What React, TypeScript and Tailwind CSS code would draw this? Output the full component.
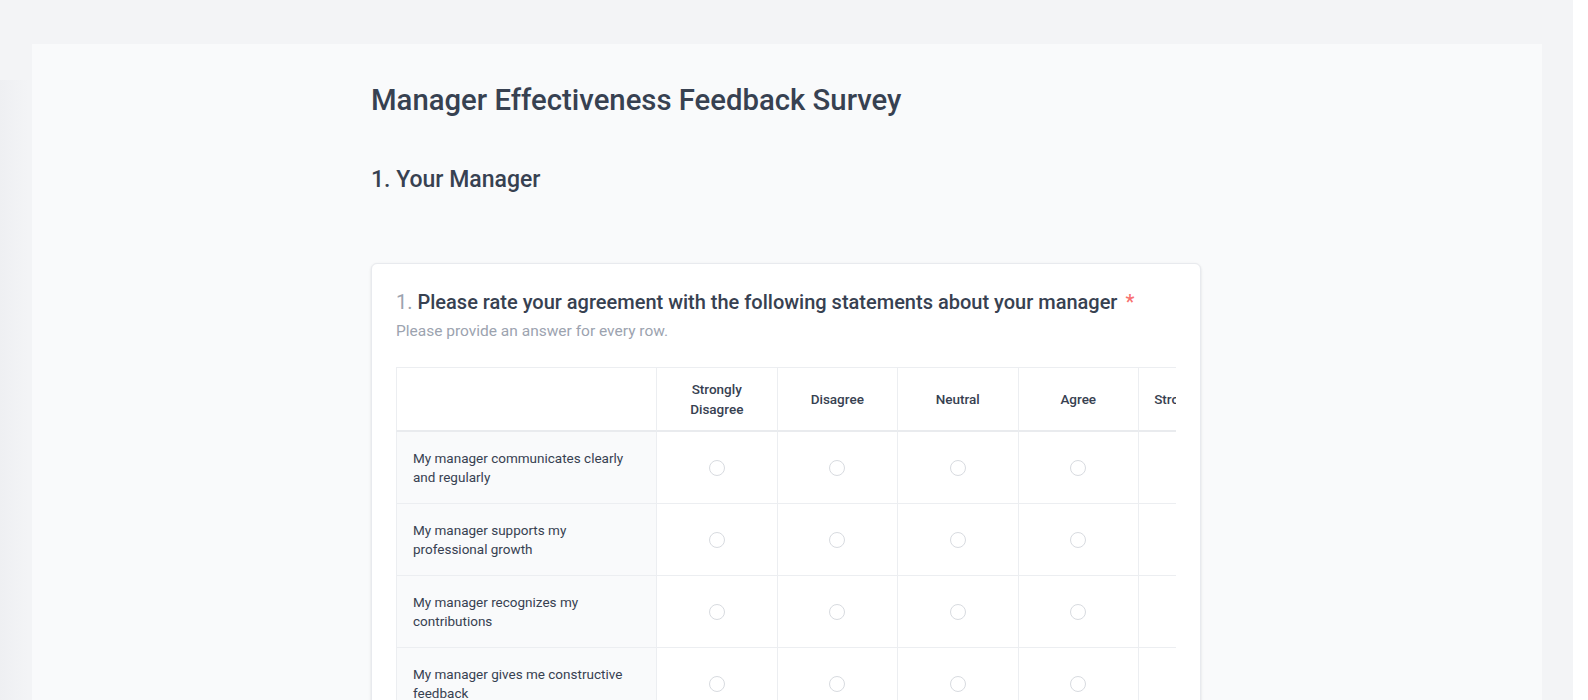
import React from 'react';

const columns = ['Strongly Disagree', 'Disagree', 'Neutral', 'Agree', 'Strongly Agree'];

const statements = [
  'My manager communicates clearly and regularly',
  'My manager supports my professional growth',
  'My manager recognizes my contributions',
  'My manager gives me constructive feedback',
  'My manager treats me with respect',
  'My manager sets clear expectations',
];

function RatingGrid() {
  return (
    <div className="mt-[26px] overflow-x-auto">
      <table className="table-fixed w-[862px] border-separate border-spacing-0 text-[13px] text-[#374151]">
        <colgroup>
          <col className="w-[260px]" />
          {columns.map((c) => (
            <col key={c} className="w-[120.5px]" />
          ))}
        </colgroup>
        <thead>
          <tr>
            <th className="h-[65px] bg-white border-t border-l border-b-2 border-[#eceef1] border-b-[#e9ebee]" />
            {columns.map((c) => (
              <th
                key={c}
                className="h-[65px] px-2 bg-white border-t border-l border-b-2 border-[#eceef1] border-b-[#e9ebee] font-medium text-[13.5px] leading-[20px] text-center"
              >
                {c === 'Strongly Disagree' ? (
                  <>
                    Strongly
                    <br />
                    Disagree
                  </>
                ) : (
                  c
                )}
              </th>
            ))}
          </tr>
        </thead>
        <tbody>
          {statements.map((s, i) => (
            <tr key={s}>
              <td className="h-[72px] pl-4 pr-4 bg-[#f9fafb] border-l border-b border-[#eceef1] text-[13.5px] leading-[19px] align-middle">
                {s}
              </td>
              {columns.map((c) => (
                <td key={c} className="h-[72px] bg-white border-l border-b border-[#eceef1] text-center align-middle">
                  <input
                    type="radio"
                    name={`row-${i}`}
                    aria-label={`${s}: ${c}`}
                    className="appearance-none block mx-auto w-4 h-4 rounded-full border border-[#d8dbe0] bg-white"
                  />
                </td>
              ))}
            </tr>
          ))}
        </tbody>
      </table>
    </div>
  );
}

export default function App() {
  return (
    <div className="min-h-screen bg-white flex" style={{ fontFamily: 'Roboto, "Noto Sans", sans-serif' }}>
      <div className="relative flex-1 mr-[15px] bg-[#f3f4f6] pt-[44px] pl-[32px] pr-[31px]">
        <div className="absolute left-0 top-[80px] bottom-0 w-[28px] bg-gradient-to-r from-[#eeeff2] to-transparent" />
        <div className="relative bg-[#f9fafb] pt-[38px] pb-16 min-h-[800px]">
          <div className="w-[830px] ml-[339px]">
            <h1 className="text-[29.3px] leading-[36px] font-medium text-[#374151]">
              Manager Effectiveness Feedback Survey
            </h1>
            <h2 className="mt-[46px] text-[23px] leading-8 font-medium text-[#374151]">1. Your Manager</h2>

            <div className="mt-[67px] bg-white border border-[#e8eaee] rounded-md shadow-sm p-6">
              <h3 className="text-xl leading-7 font-medium text-[#374151]">
                <span className="font-normal text-[#9ca3af]">1.</span> Please rate your agreement with the following
                statements about your manager <span className="ml-[3px] text-[#f87171]">*</span>
              </h3>
              <p className="mt-[5px] text-[15.5px] leading-5 text-[#9ca3af]">Please provide an answer for every row.</p>
              <RatingGrid />
            </div>
          </div>
        </div>
      </div>
    </div>
  );
}
